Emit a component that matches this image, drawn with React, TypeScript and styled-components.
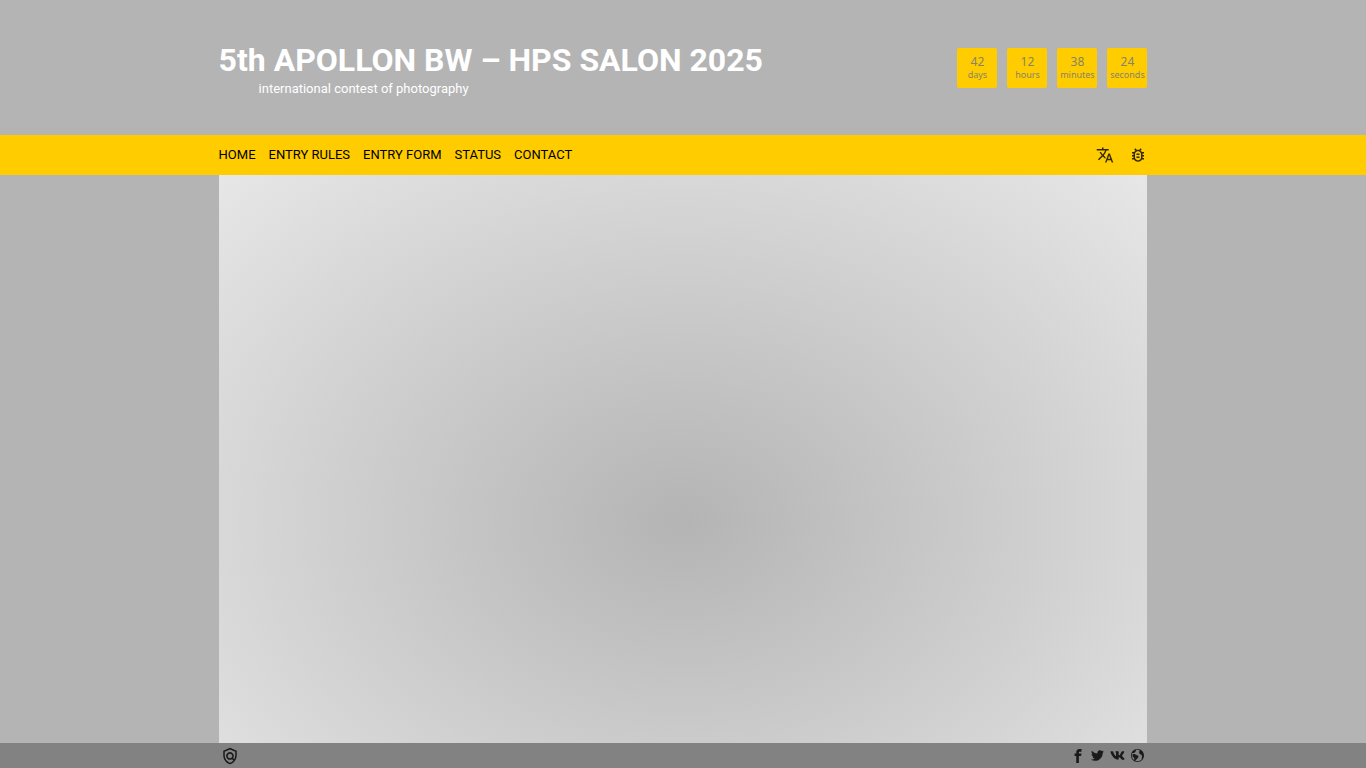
import React from 'react';
import styled, { createGlobalStyle } from 'styled-components';
import { MdTranslate, MdOutlineBugReport, MdOutlinePolicy } from 'react-icons/md';
import { FaTwitter, FaVk } from 'react-icons/fa';
import { ImEarth, ImFacebook } from 'react-icons/im';

const GlobalStyle = createGlobalStyle`
  * { box-sizing: border-box; }
  body {
    margin: 0;
    background: #b4b4b4;
    font-family: Roboto, "Open Sans", sans-serif;
  }
`;

const Page = styled.div`
  display: flex;
  flex-direction: column;
  min-height: 100vh;
`;

const Container = styled.div`
  width: 68%;
  margin: 0 auto;
  display: flex;
  align-items: center;
  justify-content: space-between;
`;

const Header = styled.header`
  display: flex;
  height: 135px;
  color: #fff;
`;

const Title = styled.h1`
  margin: 0;
  font-size: 32px;
  line-height: 42px;
  font-weight: 700;
`;

const Subtitle = styled.p`
  margin: 0 0 0 40px;
  font-size: 13px;
  line-height: 16px;
`;

const Countdown = styled.div`
  display: flex;
  gap: 10px;
`;

const Unit = styled.div`
  width: 40px;
  height: 40px;
  padding-top: 6px;
  border-radius: 2px;
  background: #ffcc00;
  color: #888466;
  font-family: "Noto Sans", sans-serif;
  text-align: center;
  white-space: nowrap;
`;

const Amount = styled.div`
  font-size: 12px;
  line-height: 15px;
`;

const UnitName = styled.div`
  display: flex;
  justify-content: center;
  font-size: 9px;
  line-height: 12px;
`;

const NavBar = styled.div`
  display: flex;
  height: 40px;
  background: #ffcc00;
`;

const Menu = styled.nav`
  display: flex;
  gap: 13px;
`;

const MenuLink = styled.a`
  color: #000;
  font-size: 13px;
  line-height: 20px;
  text-decoration: none;
`;

const Tools = styled.div`
  display: flex;
  gap: 15px;
`;

const IconButton = styled.button`
  display: flex;
  padding: 0;
  border: 0;
  background: none;
  color: #332900;
  font-size: 18px;
  cursor: pointer;
`;

const Stage = styled.main`
  flex: 1;
  width: 68%;
  margin: 0 auto;
  background: radial-gradient(ellipse farthest-corner at 50% 61%, #b4b4b4, #e7e7e7);
`;

const Footer = styled.footer`
  display: flex;
  height: 25px;
  background: #828282;
`;

const Social = styled.div`
  display: flex;
  align-items: center;
  gap: 6px;
  padding-right: 3px;
`;

const IconLink = styled.a<{ $size: number }>`
  display: flex;
  color: #1a1a1a;
  font-size: ${({ $size }) => $size}px;
`;

const PolicyLink = styled(IconLink)`
  padding-left: 2px;
`;

const countdown = [
  { amount: 42, name: 'days' },
  { amount: 12, name: 'hours' },
  { amount: 38, name: 'minutes' },
  { amount: 24, name: 'seconds' },
];

const menu = ['HOME', 'ENTRY RULES', 'ENTRY FORM', 'STATUS', 'CONTACT'];

const social = [
  { name: 'Facebook', Icon: ImFacebook, size: 14 },
  { name: 'Twitter', Icon: FaTwitter, size: 13 },
  { name: 'VK', Icon: FaVk, size: 15 },
  { name: 'Website', Icon: ImEarth, size: 13 },
];

export default function App() {
  return (
    <Page>
      <GlobalStyle />
      <Header>
        <Container>
          <div>
            <Title>5th APOLLON BW – HPS SALON 2025</Title>
            <Subtitle>international contest of photography</Subtitle>
          </div>
          <Countdown>
            {countdown.map(({ amount, name }) => (
              <Unit key={name}>
                <Amount>{amount}</Amount>
                <UnitName>{name}</UnitName>
              </Unit>
            ))}
          </Countdown>
        </Container>
      </Header>
      <NavBar>
        <Container>
          <Menu>
            {menu.map((item) => (
              <MenuLink key={item} href="#">{item}</MenuLink>
            ))}
          </Menu>
          <Tools>
            <IconButton type="button" aria-label="Language"><MdTranslate /></IconButton>
            <IconButton type="button" aria-label="Report a bug"><MdOutlineBugReport /></IconButton>
          </Tools>
        </Container>
      </NavBar>
      <Stage />
      <Footer>
        <Container>
          <PolicyLink $size={18} href="#" aria-label="Privacy policy"><MdOutlinePolicy /></PolicyLink>
          <Social>
            {social.map(({ name, Icon, size }) => (
              <IconLink key={name} $size={size} href="#" aria-label={name}><Icon /></IconLink>
            ))}
          </Social>
        </Container>
      </Footer>
    </Page>
  );
}
